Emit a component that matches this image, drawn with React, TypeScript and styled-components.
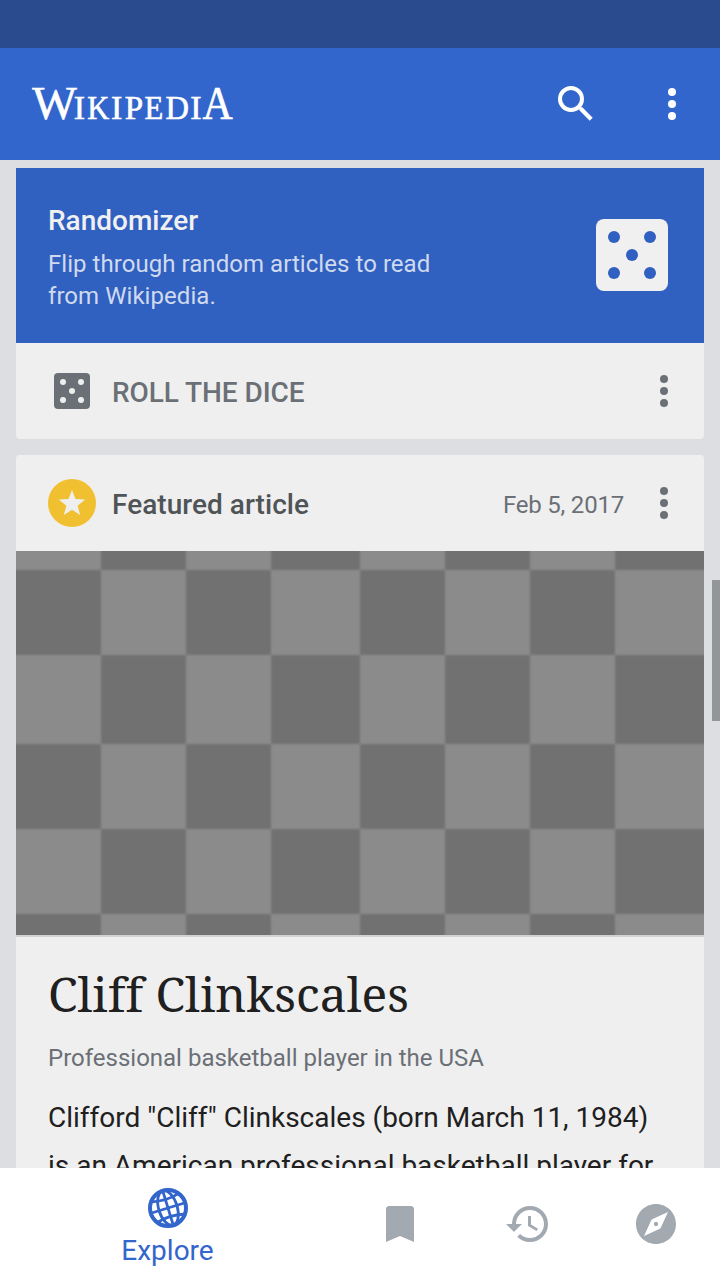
import React from "react";
import styled, { createGlobalStyle } from "styled-components";

const GlobalStyle = createGlobalStyle`
  * { box-sizing: border-box; }
  body { margin: 0; background: #dcdee2; font-family: Roboto, sans-serif; }
  h1, h2, p { margin: 0; font-weight: 400; }
  svg { display: block; flex: none; }
  button { border: 0; padding: 0; margin: 0; background: none; font: inherit; color: inherit; }
`;

const Screen = styled.div`
  display: flex;
  flex-direction: column;
  width: 720px;
  height: 1280px;
  overflow: hidden;
`;

const StatusBar = styled.div`
  flex: none;
  height: 48px;
  background: #2a4b8d;
`;

const Toolbar = styled.header`
  flex: none;
  display: flex;
  align-items: center;
  height: 112px;
  padding: 0 24px 0 32px;
  background: #36c;
  color: #fff;
`;

const Actions = styled.div`
  display: flex;
  gap: 48px;
  margin-left: auto;
`;

const IconButton = styled.button<{ $muted?: boolean }>`
  display: flex;
  align-items: center;
  justify-content: center;
  width: 48px;
  height: 48px;
  color: ${(p) => (p.$muted ? "#6b7076" : "#fff")};
`;

const Feed = styled.main`
  position: relative;
  flex: 1;
  min-height: 0;
  overflow: hidden;
  display: flex;
  flex-direction: column;
  gap: 16px;
  padding: 8px 16px 0;
`;

const Card = styled.section<{ $squareTop?: boolean }>`
  flex: none;
  background: #efefef;
  border-radius: ${(p) => (p.$squareTop ? "0 0 4px 4px" : "4px")};
  overflow: hidden;
`;

const Banner = styled.div`
  display: flex;
  align-items: center;
  justify-content: space-between;
  height: 175px;
  padding: 0 36px 1px 32px;
  background: #3060c0;
`;

const BannerCopy = styled.div`
  padding-top: 6px;
`;

const BannerTitle = styled.h2`
  font-size: 28px;
  line-height: 33px;
  font-weight: 500;
  color: #f0f0f0;
`;

const BannerText = styled.p`
  width: 400px;
  margin-top: 11px;
  font-size: 24px;
  line-height: 32px;
  letter-spacing: 0.05px;
  color: #d0daee;
`;

const CardRow = styled.div`
  display: flex;
  align-items: center;
  height: 96px;
  padding: 0 16px 0 32px;
`;

const RowIcon = styled.span`
  display: flex;
  justify-content: center;
  width: 48px;
  margin-right: 16px;
`;

const RowLabel = styled.span<{ $strong?: boolean }>`
  flex: 1;
  padding-top: 3px;
  font-size: 28px;
  line-height: 33px;
  font-weight: 500;
  letter-spacing: ${(p) => (p.$strong ? "0.04px" : "-0.08px")};
  color: ${(p) => (p.$strong ? "#4f5457" : "#6b7076")};
`;

const RowDate = styled.span`
  padding: 4px 16px 0 0;
  font-size: 24px;
  line-height: 28px;
  letter-spacing: -0.2px;
  color: #6b7076;
`;

const Article = styled.article`
  padding: 24px 32px 0;
  border-top: 2px solid #d2d2d2;
`;

const ArticleTitle = styled.h1`
  font-family: "Noto Serif", "Droid Serif", "DejaVu Serif", serif;
  font-size: 48px;
  line-height: 66px;
  font-variant-ligatures: none;
  color: #202020;
  white-space: nowrap;
`;

const ArticleSubtitle = styled.p`
  margin-top: 17px;
  font-size: 24px;
  line-height: 28px;
  color: #6b7076;
`;

const ArticleBody = styled.p`
  margin-top: 22px;
  width: 640px;
  font-size: 28px;
  line-height: 48px;
  font-variant-ligatures: none;
  color: #202020;
`;

const ScrollThumb = styled.div`
  position: absolute;
  top: 420px;
  right: 0;
  width: 8px;
  height: 141px;
  background: #929699;
`;

const NavBar = styled.nav`
  flex: none;
  display: flex;
  height: 112px;
  background: #fff;
`;

const NavItem = styled.button<{ $active?: boolean }>`
  display: flex;
  flex-direction: column;
  align-items: center;
  justify-content: center;
  width: ${(p) => (p.$active ? 336 : 128)}px;
  padding-top: ${(p) => (p.$active ? 7 : 0)}px;
  color: ${(p) => (p.$active ? "#36c" : "#a2a9b1")};
`;

const NavLabel = styled.span`
  margin: 6px 1px 0 0;
  font-size: 28px;
  line-height: 33px;
`;

const LogoMark = styled.svg`
  overflow: visible;
  font-family: "Liberation Serif", serif;
`;

const logoLetters: [string, number, number, number][] = [
  ["W", 0.2, 45.5, 44.5],
  ["I", 41.7, 33, 11.3],
  ["K", 55.2, 33, 22],
  ["I", 78.9, 33, 11.3],
  ["P", 92.8, 33, 18.4],
  ["E", 112.6, 33, 18.8],
  ["D", 133.5, 33, 23.5],
  ["I", 158.2, 33, 11.3],
  ["A", 170.6, 45.5, 30.2],
];

const Logo = () => (
  <LogoMark width="204" height="56" viewBox="0 0 204 56" aria-label="Wikipedia">
    <g fill="#fff" stroke="#fff" strokeWidth="0.6">
      {logoLetters.map(([ch, x, size, len], i) => (
        <text key={i} x={x} y="42.6" fontSize={size} textLength={len} lengthAdjust="spacingAndGlyphs">
          {ch}
        </text>
      ))}
    </g>
  </LogoMark>
);

const SearchIcon = () => (
  <svg width="48" height="48" fill="none" stroke="currentColor" strokeWidth="4">
    <circle cx="19" cy="19" r="11" />
    <path d="M26.5 26.5l3 3" strokeWidth="2.6" />
    <path d="M28.6 28.6L39.2 39.2" strokeWidth="4.2" />
  </svg>
);

const MoreIcon = () => (
  <svg width="48" height="48" fill="currentColor">
    <circle cx="24" cy="12" r="4" />
    <circle cx="24" cy="24" r="4" />
    <circle cx="24" cy="36" r="4" />
  </svg>
);

const Dice = ({ size, face, pip }: { size: number; face: string; pip: string }) => (
  <svg width={size} height={size} viewBox="0 0 36 36">
    <rect width="36" height="36" rx="4" fill={face} />
    <g fill={pip}>
      <circle cx="9" cy="9" r="3" />
      <circle cx="27" cy="9" r="3" />
      <circle cx="18" cy="18" r="3" />
      <circle cx="9" cy="27" r="3" />
      <circle cx="27" cy="27" r="3" />
    </g>
  </svg>
);

const FeaturedIcon = () => (
  <svg width="48" height="48">
    <circle cx="24" cy="24" r="24" fill="#f0c030" />
    <path
      d="M24 11L27.5 20.1L37.2 20.6L29.6 26.7L32.2 36L24 30.8L15.8 36L18.4 26.7L10.8 20.6L20.5 20.1Z"
      fill="#efefef"
    />
  </svg>
);

const columns = [-12, 85, 170, 255, 344, 429, 514, 599, 700];
const rows = [-12, 19, 104, 193, 278, 363, 396];

const Checkerboard = () => (
  <svg width="688" height="384" viewBox="0 0 688 384">
    <defs>
      <filter id="soften" x="0" y="0" width="1" height="1">
        <feGaussianBlur stdDeviation="1.2" />
      </filter>
    </defs>
    <g filter="url(#soften)">
      <rect x="-12" y="-12" width="712" height="408" fill="#717171" />
      {rows.slice(0, -1).map((y, r) =>
        columns.slice(0, -1).map((x, c) =>
          (r + c) % 2 === 0 ? (
            <rect key={`${r}-${c}`} x={x} y={y} width={columns[c + 1] - x} height={rows[r + 1] - y} fill="#8b8b8b" />
          ) : null
        )
      )}
    </g>
  </svg>
);

const GlobeIcon = () => (
  <svg width="40" height="40" viewBox="-20 -20 40 40" fill="none" stroke="currentColor" strokeWidth="2.8">
    <circle r="18" strokeWidth="4" />
    <g transform="rotate(-17)">
      <path d="M-18 0H18M0 -18V18" />
      <ellipse rx="9.3" ry="18" />
      <path d="M-15.5 -11Q0 -6.5 15.5 -11M-15.5 11Q0 6.5 15.5 11" />
    </g>
  </svg>
);

const NavIcon = ({ d }: { d: string }) => (
  <svg width="48" height="48" viewBox="0 0 24 24" fill="currentColor">
    <path d={d} />
  </svg>
);

const bookmarkPath = "M17.5 3h-11C5.67 3 5 3.67 5 4.5V21l7-3 7 3V4.5c0-.83-.67-1.5-1.5-1.5z";
const historyPath =
  "M13 3a9 9 0 0 0-9 9H1l3.89 3.89.07.14L9 12H6c0-3.87 3.13-7 7-7s7 3.13 7 7-3.13 7-7 7c-1.93 0-3.68-.79-4.94-2.06l-1.42 1.42A8.954 8.954 0 0 0 13 21a9 9 0 0 0 0-18zm-1 5v5l4.28 2.54.72-1.21-3.5-2.08V8H12z";
const explorePath =
  "M12 10.9c-.61 0-1.1.49-1.1 1.1s.49 1.1 1.1 1.1c.61 0 1.1-.49 1.1-1.1s-.49-1.1-1.1-1.1zM12 2C6.48 2 2 6.48 2 12s4.48 10 10 10 10-4.48 10-10S17.52 2 12 2zm2.19 12.19L6 18l3.81-8.19L18 6l-3.81 8.19z";

export default function App() {
  return (
    <Screen>
      <GlobalStyle />
      <StatusBar />
      <Toolbar>
        <Logo />
        <Actions>
          <IconButton aria-label="Search">
            <SearchIcon />
          </IconButton>
          <IconButton aria-label="More">
            <MoreIcon />
          </IconButton>
        </Actions>
      </Toolbar>
      <Feed>
        <Card $squareTop>
          <Banner>
            <BannerCopy>
              <BannerTitle>Randomizer</BannerTitle>
              <BannerText>Flip through random articles to read from Wikipedia.</BannerText>
            </BannerCopy>
            <Dice size={72} face="#f0f0f0" pip="#3060c0" />
          </Banner>
          <CardRow>
            <RowIcon>
              <Dice size={36} face="#6b7076" pip="#efefef" />
            </RowIcon>
            <RowLabel>ROLL THE DICE</RowLabel>
            <IconButton aria-label="More" $muted>
              <MoreIcon />
            </IconButton>
          </CardRow>
        </Card>
        <Card>
          <CardRow>
            <RowIcon>
              <FeaturedIcon />
            </RowIcon>
            <RowLabel $strong>Featured article</RowLabel>
            <RowDate>Feb 5, 2017</RowDate>
            <IconButton aria-label="More" $muted>
              <MoreIcon />
            </IconButton>
          </CardRow>
          <Checkerboard />
          <Article>
            <ArticleTitle>Cliff Clinkscales</ArticleTitle>
            <ArticleSubtitle>Professional basketball player in the USA</ArticleSubtitle>
            <ArticleBody>
              Clifford "Cliff" Clinkscales (born March 11, 1984)
              <br />
              is an American professional basketball player for
            </ArticleBody>
          </Article>
        </Card>
        <ScrollThumb />
      </Feed>
      <NavBar>
        <NavItem $active>
          <GlobeIcon />
          <NavLabel>Explore</NavLabel>
        </NavItem>
        <NavItem aria-label="Reading lists">
          <NavIcon d={bookmarkPath} />
        </NavItem>
        <NavItem aria-label="History">
          <NavIcon d={historyPath} />
        </NavItem>
        <NavItem aria-label="Nearby">
          <NavIcon d={explorePath} />
        </NavItem>
      </NavBar>
    </Screen>
  );
}
